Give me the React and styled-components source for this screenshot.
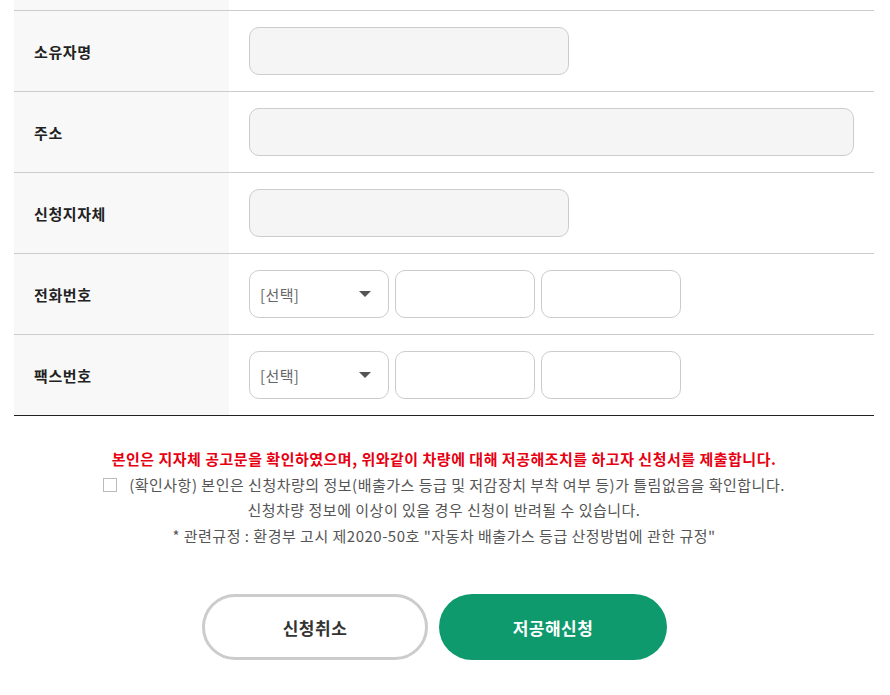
import React from 'react';
import styled, { createGlobalStyle } from 'styled-components';

const GlobalStyle = createGlobalStyle`
  html, body {
    margin: 0;
    padding: 0;
    background: #fff;
    font-family: "Noto Sans CJK KR", "Noto Sans", sans-serif;
    overflow: hidden;
  }
`;

const Page = styled.div`
  width: 890px;
  padding: 0 16px 0 14px;
  box-sizing: border-box;
`;

const Table = styled.div`
  width: 860px;
  border-bottom: 1px solid #222;
`;

const Row = styled.div`
  display: grid;
  grid-template-columns: 215px 1fr;
  height: ${(p) => p.h || 81}px;
  border-top: ${(p) => (p.first ? 'none' : '1px solid #ccc')};
  box-sizing: border-box;
`;

const Label = styled.div`
  background: #f8f8f8;
  display: flex;
  align-items: center;
  padding-left: 20px;
  font-size: 15px;
  font-weight: 700;
  letter-spacing: 0.6px;
  color: #222;
`;

const Cell = styled.div`
  display: flex;
  align-items: center;
  gap: 6px;
  padding-left: 20px;
`;

const Field = styled.div`
  width: ${(p) => p.w}px;
  height: 48px;
  box-sizing: border-box;
  border: 1px solid #ccc;
  border-radius: 10px;
  background: ${(p) => (p.disabled ? '#f5f5f5' : '#fff')};
`;

const Select = styled.div`
  width: 140px;
  height: 48px;
  box-sizing: border-box;
  border: 1px solid #ccc;
  border-radius: 10px;
  display: flex;
  align-items: center;
  justify-content: space-between;
  padding: 0 17px 0 10px;
  font-size: 15px;
  letter-spacing: 0.4px;
  color: #666;
`;

const Caret = styled.span`
  width: 0;
  height: 0;
  border-left: 6px solid transparent;
  border-right: 6px solid transparent;
  border-top: 6px solid #555;
`;

const Notice = styled.div`
  margin-top: 30px;
  text-align: center;
  font-size: 15px;
  line-height: 25.5px;
  letter-spacing: 0.5px;
  color: #555;
`;

const Warn = styled.p`
  margin: 0;
  color: #e60012;
  font-weight: 700;
`;

const Line = styled.p`
  margin: 0;
`;

const Check = styled.span`
  display: inline-block;
  width: 12px;
  height: 12px;
  border: 1px solid #bbb;
  vertical-align: -1px;
  margin-right: 12px;
`;

const Buttons = styled.div`
  display: flex;
  justify-content: center;
  gap: 11px;
  margin-top: 46px;
  padding-right: 19px;
`;

const Button = styled.button`
  width: ${(p) => (p.primary ? 228 : 226)}px;
  height: 66px;
  border-radius: 33px;
  box-sizing: border-box;
  font-family: inherit;
  font-size: 17px;
  font-weight: 700;
  letter-spacing: 0.5px;
  cursor: pointer;
  border: ${(p) => (p.primary ? 'none' : '3px solid #ccc')};
  background: ${(p) => (p.primary ? '#0f9a6e' : '#fff')};
  color: ${(p) => (p.primary ? '#fff' : '#333')};
`;

const PhoneCell = () => (
  <Cell>
    <Select>
      [선택]
      <Caret />
    </Select>
    <Field w={140} />
    <Field w={140} />
  </Cell>
);

export default function App() {
  return (
    <>
      <GlobalStyle />
      <Page>
        <Table>
          <Row first h={10}>
            <Label />
            <Cell />
          </Row>
          <Row>
            <Label>소유자명</Label>
            <Cell>
              <Field w={320} disabled />
            </Cell>
          </Row>
          <Row>
            <Label>주소</Label>
            <Cell>
              <Field w={605} disabled />
            </Cell>
          </Row>
          <Row>
            <Label>신청지자체</Label>
            <Cell>
              <Field w={320} disabled />
            </Cell>
          </Row>
          <Row>
            <Label>전화번호</Label>
            <PhoneCell />
          </Row>
          <Row>
            <Label>팩스번호</Label>
            <PhoneCell />
          </Row>
        </Table>
        <Notice>
          <Warn>본인은 지자체 공고문을 확인하였으며, 위와같이 차량에 대해 저공해조치를 하고자 신청서를 제출합니다.</Warn>
          <Line>
            <Check />
            (확인사항) 본인은 신청차량의 정보(배출가스 등급 및 저감장치 부착 여부 등)가 틀림없음을 확인합니다.
          </Line>
          <Line>신청차량 정보에 이상이 있을 경우 신청이 반려될 수 있습니다.</Line>
          <Line>* 관련규정 : 환경부 고시 제2020-50호 "자동차 배출가스 등급 산정방법에 관한 규정"</Line>
        </Notice>
        <Buttons>
          <Button>신청취소</Button>
          <Button primary>저공해신청</Button>
        </Buttons>
      </Page>
    </>
  );
}
